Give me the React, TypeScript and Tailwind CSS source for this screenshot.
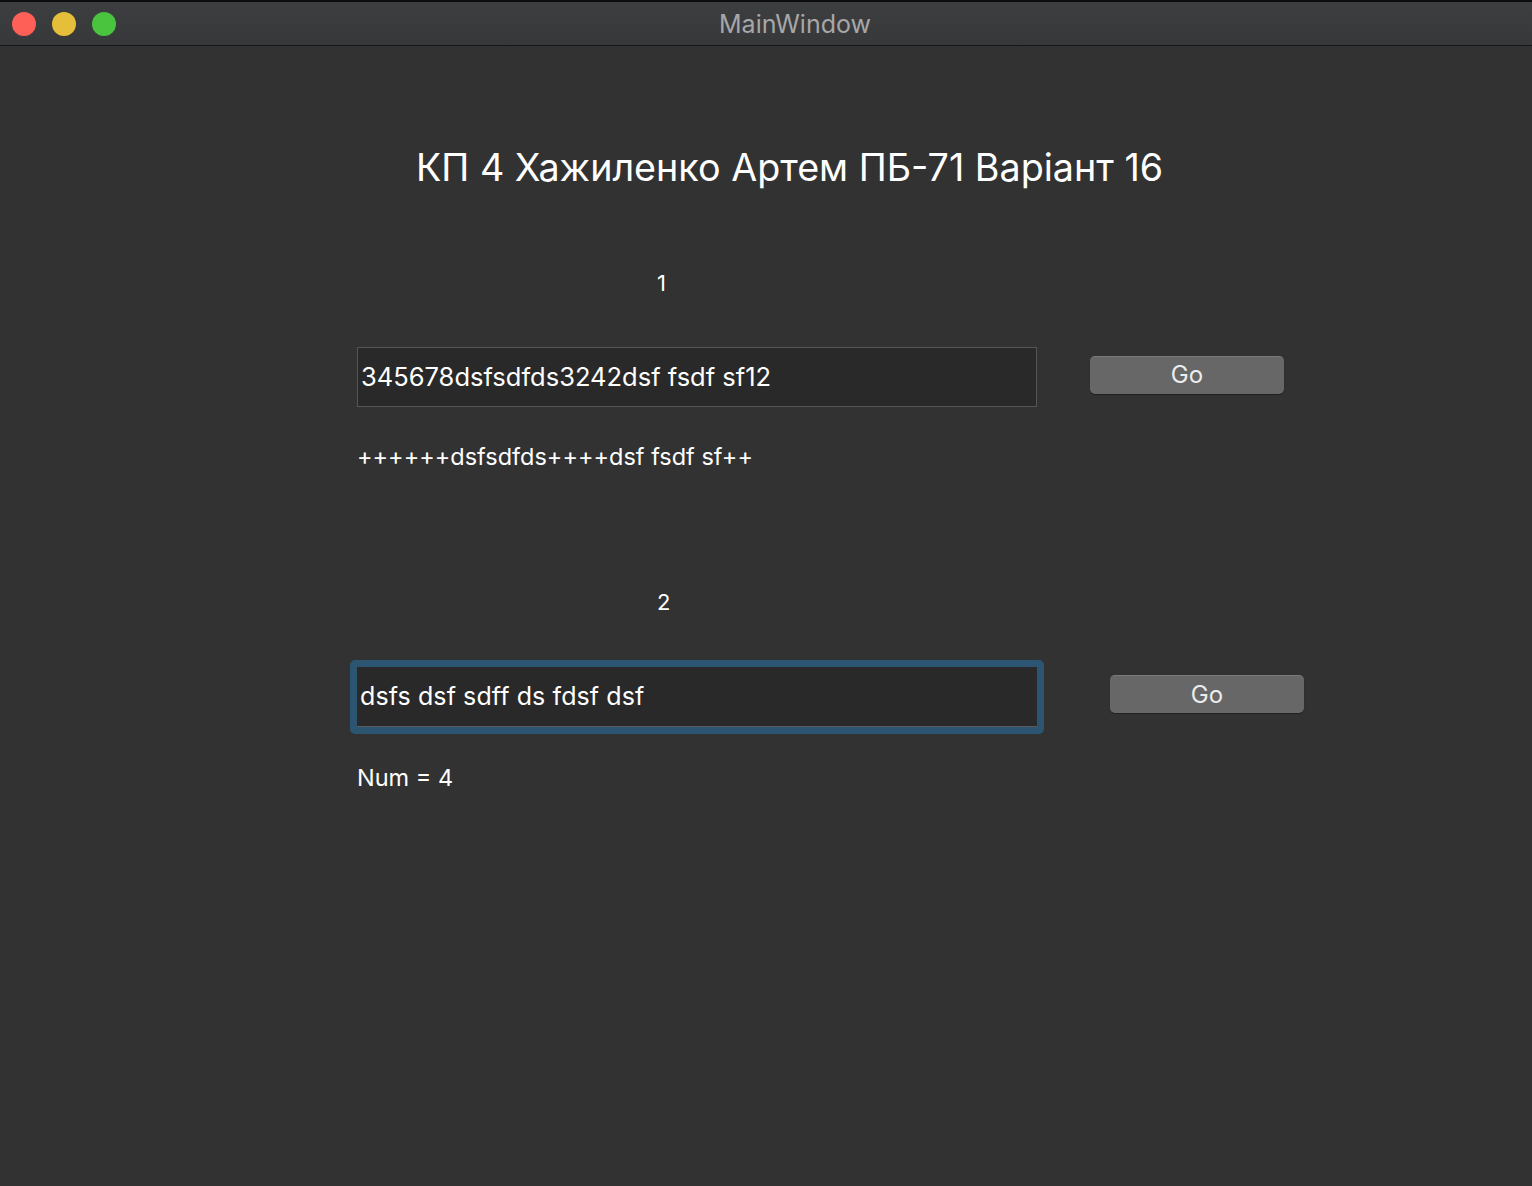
import React from 'react';

const font = { fontFamily: 'Inter, "Noto Sans", sans-serif' };

const TrafficLights: React.FC = () => (
  <div className="flex items-center gap-4 pl-3">
    <span className="block h-6 w-6 rounded-full bg-[#fe5f57]" />
    <span className="block h-6 w-6 rounded-full bg-[#e6bf3a]" />
    <span className="block h-6 w-6 rounded-full bg-[#4ac33f]" />
  </div>
);

interface GoButtonProps {
  label: string;
}

const GoButton: React.FC<GoButtonProps> = ({ label }) => (
  <button className="h-[38px] w-[194px] rounded-[5px] bg-[#676767] text-[24px] text-[#ececec] shadow-[0_1px_1px_rgba(0,0,0,0.35)] border-t border-[#7a7a7a]">
    {label}
  </button>
);

export default function App() {
  return (
    <div className="flex h-[1186px] w-[1532px] flex-col bg-[#323232] text-white" style={font}>
      {/* Title bar */}
      <div className="relative flex h-[46px] items-center border-b border-[#161616] border-t-2 border-t-[#0d0d0d] bg-gradient-to-b from-[#3d3e40] to-[#37383a]">
        <TrafficLights />
        <div className="absolute inset-0 flex items-center justify-center pl-[58px] pt-[3px] text-[25px] text-[#a7a7a9]">
          MainWindow
        </div>
      </div>

      {/* Body */}
      <div className="flex flex-col">
        <h1 className="mt-[96px] pl-[416px] text-[37.7px] font-normal leading-[50px]">
          КП 4 Хажиленко Артем ПБ-71 Варіант 16
        </h1>

        {/* Section 1 */}
        <div className="mt-[76px] pl-[657px] text-[22px] leading-[30px]">1</div>
        <div className="mt-[49px] flex items-center pl-[357px]">
          <div className="flex h-[60px] w-[680px] items-center border border-[#555555] bg-[#292929] px-[3px] text-[25.5px]">
            345678dsfsdfds3242dsf fsdf sf12
          </div>
          <div className="ml-[53px] -mt-[5px]">
            <GoButton label="Go" />
          </div>
        </div>
        <div className="mt-[35px] pl-[357px] text-[23.5px] leading-[30px]">
          ++++++dsfsdfds++++dsf fsdf sf++
        </div>

        {/* Section 2 */}
        <div className="mt-[115px] pl-[657px] text-[22px] leading-[30px]">2</div>
        <div className="mt-[43px] flex items-center pl-[350px]">
          <div className="rounded-[5px] bg-[#2b5570] p-[7px]">
            <div className="flex h-[60px] w-[680px] items-center bg-[#292929] px-[3px] text-[25px] tracking-[0.1px] border-b border-[#5a5a5a]">
              dsfs dsf sdff ds fdsf dsf
            </div>
          </div>
          <div className="ml-[66px] -mt-[6px]">
            <GoButton label="Go" />
          </div>
        </div>
        <div className="mt-[29px] pl-[357px] text-[23.5px] leading-[30px]">Num = 4</div>
      </div>
    </div>
  );
}
